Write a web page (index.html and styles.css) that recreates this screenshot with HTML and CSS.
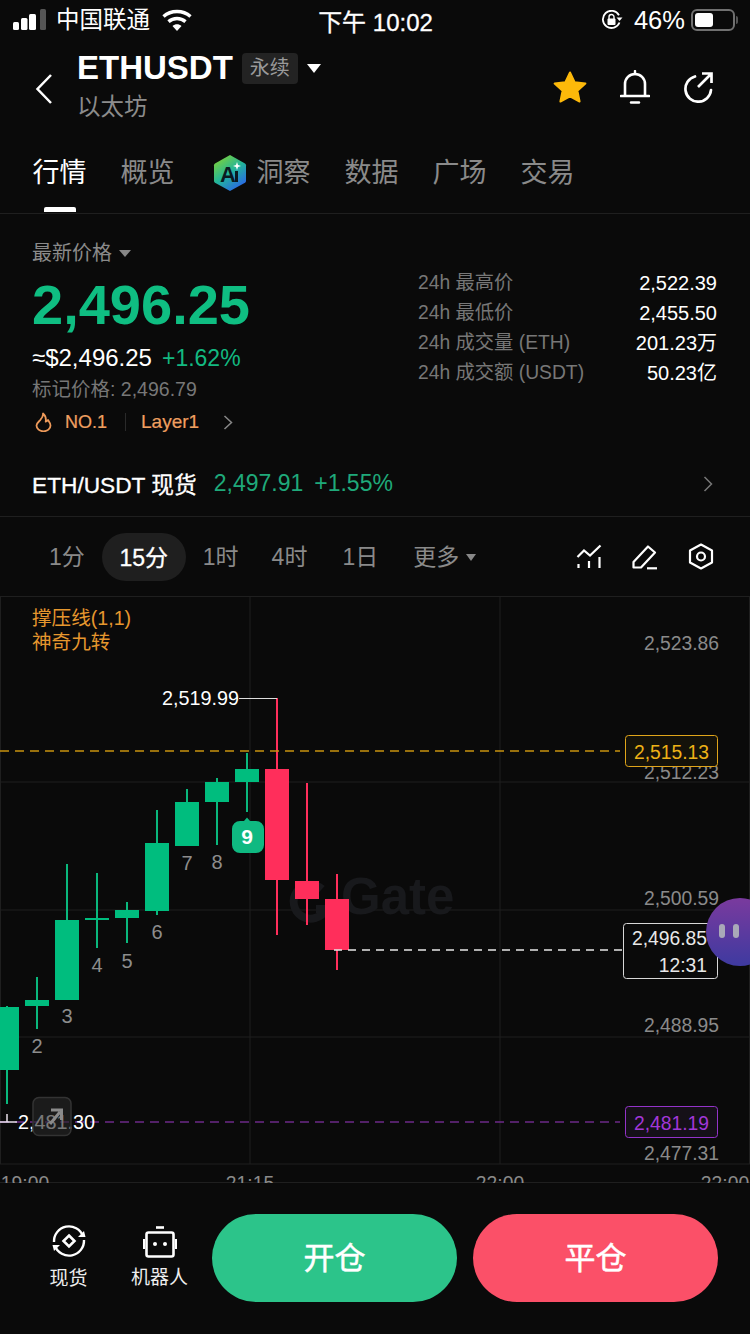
FILE: index.html
```html
<!DOCTYPE html>
<html lang="zh-CN">
<head>
    <meta charset="UTF-8">
    <meta name="viewport" content="width=device-width, initial-scale=1.0">
    <title>ETHUSDT 永续</title>
    <link rel="stylesheet" href="styles.css">
</head>
<body>
<div class="page">
    <!-- status bar -->
    <div class="status-bar">
        <div class="status-left">
            <svg class="signal" width="34" height="22" viewBox="0 0 34 22">
                <rect x="0" y="13" width="6" height="8" rx="1.5" fill="#fff"/>
                <rect x="8" y="9" width="6.5" height="12" rx="1.5" fill="#fff"/>
                <rect x="16" y="5" width="7" height="16" rx="1.5" fill="#fff"/>
                <rect x="27" y="0" width="6" height="21" rx="1.5" fill="#555"/>
            </svg>
            <span class="carrier">中国联通</span>
            <svg class="wifi" width="30" height="22" viewBox="0 0 30 22">
                <path d="M1.5 7.5C9 .8 21 .8 28.5 7.5" fill="none" stroke="#fff" stroke-width="3.4"/>
                <path d="M6.5 12.6c4.8-4.2 12.2-4.2 17 0" fill="none" stroke="#fff" stroke-width="3.4"/>
                <path d="M10.5 17c2.6-2.2 6.4-2.2 9 0L15 22z" fill="#fff"/>
            </svg>
        </div>
        <div class="status-time">下午 10:02</div>
        <div class="status-right">
            <svg class="rotate-lock" width="22" height="20" viewBox="0 0 22 20">
                <path d="M18.5 12.5A8.6 8.6 0 1 1 18 5.2" fill="none" stroke="#fff" stroke-width="1.8"/>
                <path d="M15.5 7.5h6l-3 3.6z" fill="#fff"/>
                <rect x="6.5" y="8.5" width="8" height="6.5" rx="1" fill="#fff"/>
                <path d="M8 9V7a2.5 2.5 0 0 1 5 0v2" fill="none" stroke="#fff" stroke-width="1.4"/>
            </svg>
            <span class="battery-text">46%</span>
            <div class="battery"><div class="battery-fill"></div></div>
            <div class="battery-nub"></div>
        </div>
    </div>

    <!-- symbol header -->
    <div class="symbol-bar">
        <svg class="back" width="18" height="32" viewBox="0 0 18 32">
            <path d="M16 2 2.5 16 16 30" fill="none" stroke="#fff" stroke-width="2.5"/>
        </svg>
        <div class="symbol-info">
            <div class="symbol-line">
                <span class="symbol-name">ETHUSDT</span>
                <span class="symbol-tag">永续</span>
                <span class="caret caret-white"></span>
            </div>
            <div class="symbol-sub">以太坊</div>
        </div>
        <div class="symbol-actions">
            <svg width="34" height="33" viewBox="0 0 34 33">
                <path d="M17 1.5 21.6 11.2 32.4 12.6 24.4 19.8 26.6 30.5 17 25.3 7.4 30.5 9.6 19.8 1.6 12.6 12.4 11.2z" fill="#fdb90a" stroke="#fdb90a" stroke-width="2" stroke-linejoin="round"/>
            </svg>
            <svg width="30" height="34" viewBox="0 0 30 34">
                <path d="M5 25V14a10 10 0 0 1 20 0v11" fill="none" stroke="#fff" stroke-width="2.6"/>
                <path d="M1 26h28" stroke="#fff" stroke-width="2.6" stroke-linecap="round"/>
                <path d="M11 32.5h8" stroke="#fff" stroke-width="2.4" stroke-linecap="round"/>
                <path d="M15 1v3" stroke="#fff" stroke-width="2.4" stroke-linecap="round"/>
            </svg>
            <svg width="31" height="31" viewBox="0 0 31 31">
                <path d="M12 4.5A12.8 12.8 0 1 0 28 18" fill="none" stroke="#fff" stroke-width="2.7" stroke-linecap="round"/>
                <path d="M15 15 28 2M19 1.500h9.500V11" fill="none" stroke="#fff" stroke-width="2.7"/>
            </svg>
        </div>
    </div>

    <!-- tabs -->
    <div class="tabs">
        <div class="tab tab-active">行情</div>
        <div class="tab">概览</div>
        <div class="tab tab-ai">
            <svg width="34" height="38" viewBox="0 0 34 38">
                <defs>
                    <linearGradient id="aiGrad" x1="0.1" y1="0.1" x2="0.7" y2="1">
                        <stop offset="0" stop-color="#7ad13c"/>
                        <stop offset="0.5" stop-color="#22b59a"/>
                        <stop offset="1" stop-color="#2a66e8"/>
                    </linearGradient>
                </defs>
                <path d="M17 1 32 9.5a2 2 0 0 1 1 1.7V27a2 2 0 0 1-1 1.7L17 37 2 28.7a2 2 0 0 1-1-1.7V11.2a2 2 0 0 1 1-1.7z" fill="url(#aiGrad)"/>
                <text class="ai-mark" x="7" y="28">A</text>
                <rect x="22" y="17" width="3" height="11" fill="#0a1a20"/>
                <path d="M24 8l1 3 3 1-3 1-1 3-1-3-3-1 3-1z" fill="#fff"/>
            </svg>
            <span>洞察</span>
        </div>
        <div class="tab">数据</div>
        <div class="tab">广场</div>
        <div class="tab">交易</div>
    </div>

    <!-- price summary -->
    <div class="summary">
        <div class="summary-left">
            <div class="price-label">最新价格<span class="caret caret-grey"></span></div>
            <div class="price-main">2,496.25</div>
            <div class="price-sub"><span class="price-usd">≈$2,496.25</span><span class="price-change">+1.62%</span></div>
            <div class="price-mark">标记价格: 2,496.79</div>
            <div class="price-tags">
                <svg width="17" height="20" viewBox="0 0 17 20">
                    <path d="M8 1.5c.5 3-1 4.5-3 6.800C3 10.300 1.500 11.500 1.500 13.500a7 5.800 0 0 0 14 0c0-2.500-1.500-3.800-2.500-5.500-.7 1-1.500 1.500-2.300 1.700C11.300 6.500 10.300 3.500 8 1.500z" fill="none" stroke="#ee9a5a" stroke-width="1.8" stroke-linejoin="round"/>
                </svg>
                <span class="tag-no">NO.1</span>
                <span class="tag-sep"></span>
                <span class="tag-layer">Layer1</span>
                <svg class="tag-more" width="10" height="15" viewBox="0 0 10 15">
                    <path d="M1.5 1 8.5 7.5 1.5 14" fill="none" stroke="#888" stroke-width="1.5"/>
                </svg>
            </div>
        </div>
        <div class="stats">
            <span class="stat-label">24h 最高价</span><span class="stat-value">2,522.39</span>
            <span class="stat-label">24h 最低价</span><span class="stat-value">2,455.50</span>
            <span class="stat-label">24h 成交量 (ETH)</span><span class="stat-value">201.23万</span>
            <span class="stat-label">24h 成交额 (USDT)</span><span class="stat-value">50.23亿</span>
        </div>
    </div>

    <!-- spot link -->
    <div class="spot-row">
        <span class="spot-name">ETH/USDT 现货</span>
        <span class="spot-price">2,497.91</span>
        <span class="spot-change">+1.55%</span>
        <svg class="spot-more" width="10" height="16" viewBox="0 0 10 16">
            <path d="M1.5 1 8.5 8 1.5 15" fill="none" stroke="#777" stroke-width="1.5"/>
        </svg>
    </div>

    <!-- intervals -->
    <div class="intervals">
        <span class="interval int-1m">1分</span>
        <span class="interval interval-active">15分</span>
        <span class="interval int-1h">1时</span>
        <span class="interval int-4h">4时</span>
        <span class="interval int-1d">1日</span>
        <span class="interval int-more">更多<span class="caret caret-grey"></span></span>
        <div class="chart-tools">
            <svg width="26" height="26" viewBox="0 0 26 26">
                <path d="M1.5 13 8 6.500 14 11.500 24.500 1.500" fill="none" stroke="#fff" stroke-width="2.2"/>
                <path d="M2.500 20v4M13 17v7M23.500 13v11" stroke="#fff" stroke-width="2.2"/>
            </svg>
            <svg width="26" height="26" viewBox="0 0 26 26">
                <path d="M1.5 18 16 2.500 23 8.500 9 23.500H1.500z" fill="none" stroke="#fff" stroke-width="2.2" stroke-linejoin="round"/>
                <path d="M15 24.3h10" stroke="#fff" stroke-width="2.2"/>
            </svg>
            <svg width="26" height="27" viewBox="0 0 26 27">
                <path d="M13 1.500 24 7.500V19.500L13 25.500 2 19.500V7.500z" fill="none" stroke="#fff" stroke-width="2.2" stroke-linejoin="round"/>
                <circle cx="13" cy="13.5" r="4" fill="none" stroke="#fff" stroke-width="2.2"/>
            </svg>
        </div>
    </div>

    <!-- kline chart, coordinates follow the page y -->
    <div class="chart">
        <svg class="chart-svg" width="750" height="586" viewBox="0 597 750 586">
            <g class="grid">
                <path d="M0 782H750M0 910H750M0 1037H750M0 1164H750M0 1182.5H750"/>
                <path d="M.5 597V1164M250 597V1164M500 597V1164M749.5 597V1164"/>
            </g>

            <g class="watermark">
                <path d="M322 889a17 17 0 1 0 4 20h-10" fill="none" stroke="#18191c" stroke-width="8"/>
                <text x="341" y="914">Gate</text>
            </g>

            <text class="legend" x="32" y="625">撑压线(1,1)</text>
            <text class="legend" x="32" y="649">神奇九转</text>

            <!-- up candles -->
            <g class="up-wick">
                <path d="M7 1006V1104M37 977V1029M67 864V920M97 873V948M127 902V943M157 810V915M187 789V802M217 778V845M247 753V812"/>
            </g>
            <g class="up-body">
                <rect x="-5" y="1007" width="24" height="63"/>
                <rect x="25" y="1000" width="24" height="6"/>
                <rect x="55" y="920" width="24" height="80"/>
                <rect x="85" y="918" width="24" height="2"/>
                <rect x="115" y="910" width="24" height="8"/>
                <rect x="145" y="843" width="24" height="68"/>
                <rect x="175" y="802" width="24" height="44"/>
                <rect x="205" y="782" width="24" height="20"/>
                <rect x="235" y="769" width="24" height="13"/>
            </g>

            <!-- down candles -->
            <g class="down-wick">
                <path d="M277 698V935M307 783V925M337 874V970"/>
            </g>
            <g class="down-body">
                <rect x="265" y="769" width="24" height="111"/>
                <rect x="295" y="881" width="24" height="18"/>
                <rect x="325" y="899" width="24" height="51"/>
            </g>

            <!-- td sequence -->
            <g class="td">
                <text x="37" y="1053">2</text>
                <text x="67" y="1023">3</text>
                <text x="97" y="972">4</text>
                <text x="127" y="968">5</text>
                <text x="157" y="939">6</text>
                <text x="187" y="870">7</text>
                <text x="217" y="869">8</text>
            </g>
            <path class="td-badge" d="M238 821H244L247 817.5 250 821H256a8 8 0 0 1 8 8V845a8 8 0 0 1-8 8H240a8 8 0 0 1-8-8V829a8 8 0 0 1 8-8z"/>
            <text class="td-nine" x="247" y="844">9</text>

            <!-- high / low marks -->
            <path class="mark-line" d="M239 698.5H277"/>
            <text class="mark-text" x="239" y="705" text-anchor="end">2,519.99</text>

            <!-- order lines -->
            <path class="dash dash-yellow" d="M0 751H620"/>
            <path class="dash dash-purple" d="M0 1122H620"/>
            <path class="dash dash-white" d="M334 950H623"/>

            <path class="low-line" d="M0 1122H17M7 1114V1122"/>
            <text class="mark-text" x="18" y="1129">2,481.30</text>

            <!-- fullscreen button lies over the low mark -->
            <rect class="expand-box" x="33" y="1097.5" width="38" height="38" rx="6"/>
            <path class="expand-arrow" d="M50 1124 60 1112M51 1110H61.5V1120"/>

            <!-- price axis -->
            <g class="axis">
                <text x="719" y="650">2,523.86</text>
                <text x="719" y="779">2,512.23</text>
                <text x="719" y="905">2,500.59</text>
                <text x="719" y="1032">2,488.95</text>
                <text x="719" y="1160">2,477.31</text>
            </g>

            <rect class="box box-yellow" x="625.5" y="735.5" width="92" height="31" rx="3"/>
            <text class="box-text text-yellow" x="709" y="759">2,515.13</text>
            <rect class="box box-white" x="623.5" y="923.5" width="94" height="55" rx="3"/>
            <text class="box-text text-white" x="707" y="945">2,496.85</text>
            <text class="box-text text-white" x="707" y="972">12:31</text>
            <rect class="box box-purple" x="625.5" y="1106.5" width="92" height="31" rx="3"/>
            <text class="box-text text-purple" x="709" y="1130">2,481.19</text>

            <!-- time axis, cut off by the edge of the chart -->
            <g class="times">
                <text x="25" y="1190">19:00</text>
                <text x="250" y="1190">21:15</text>
                <text x="500" y="1190">22:00</text>
                <text x="725" y="1190">22:00</text>
            </g>
        </svg>
        <div class="float-bot">
            <span class="float-eye"></span>
            <span class="float-eye"></span>
        </div>
    </div>

    <!-- bottom actions -->
    <div class="bottom-bar">
        <div class="bottom-link link-spot">
            <svg width="34" height="34" viewBox="0 0 34 34">
                <path d="M2 18A15 15 0 0 1 31 12" fill="none" stroke="#fff" stroke-width="2.4"/>
                <path d="M32 16A15 15 0 0 1 3 22" fill="none" stroke="#fff" stroke-width="2.4"/>
                <path d="M26 13H33.5L32 7z" fill="#fff"/>
                <path d="M8 21H.5L2 27z" fill="#fff"/>
                <path d="M17 11.500 22.500 17 17 22.500 11.500 17z" fill="none" stroke="#fff" stroke-width="2.6"/>
            </svg>
            <span>现货</span>
        </div>
        <div class="bottom-link link-bot">
            <svg width="34" height="32" viewBox="0 0 34 32">
                <path d="M13 1.5h8" stroke="#fff" stroke-width="2.6"/>
                <rect x="3.5" y="6.5" width="27" height="24" rx="2" fill="none" stroke="#fff" stroke-width="2.6"/>
                <path d="M1 13v10M33 13v10" stroke="#fff" stroke-width="2.2"/>
                <circle cx="12" cy="18" r="2" fill="#fff"/>
                <circle cx="22" cy="18" r="2" fill="#fff"/>
            </svg>
            <span>机器人</span>
        </div>
        <div class="action action-open">开仓</div>
        <div class="action action-close">平仓</div>
    </div>
</div>
</body>
</html>
```

FILE: styles.css
```css
* {
    box-sizing: border-box;
}
html, body {
    margin: 0;
    padding: 0;
    background-color: #0a0a0a;
}
body {
    font-family: "Liberation Sans", "Noto Sans CJK SC", sans-serif;
    color: #fff;
}
.page {
    position: relative;
    width: 750px;
    height: 1334px;
    overflow: hidden;
    background-color: #0a0a0a;
}
.caret {
    display: inline-block;
    width: 0;
    height: 0;
    border-left: 7px solid transparent;
    border-right: 7px solid transparent;
}
.caret-white {
    border-top: 9px solid #fff;
}
.caret-grey {
    border-left-width: 6px;
    border-right-width: 6px;
    border-top: 7px solid #888;
}

/* status bar */
.status-bar {
    display: flex;
    align-items: center;
    justify-content: space-between;
    height: 40px;
    padding: 0 12px 0 13px;
}
.status-left {
    display: flex;
    align-items: center;
    width: 240px;
}
.carrier {
    margin-left: 9px;
    font-size: 23.5px;
    line-height: 40px;
}
.wifi {
    margin-left: 12px;
}
.status-time {
    font-size: 24px;
    -webkit-text-stroke: 0.3px #fff;
}
.status-right {
    display: flex;
    align-items: center;
    justify-content: flex-end;
    width: 240px;
}
.battery-text {
    margin-left: 11px;
    font-size: 25.5px;
}
.battery {
    width: 44px;
    height: 22px;
    margin-left: 6px;
    padding: 2px;
    border: 2px solid #707070;
    border-radius: 6px;
}
.battery-fill {
    width: 18px;
    height: 14px;
    border-radius: 3px;
    background-color: #fff;
}
.battery-nub {
    width: 2px;
    height: 8px;
    margin-left: 1px;
    border-radius: 0 2px 2px 0;
    background-color: #555;
}

/* symbol header */
.symbol-bar {
    display: flex;
    align-items: flex-start;
    height: 90px;
    padding: 8px 36px 0 35px;
}
.back {
    margin-top: 25px;
}
.symbol-info {
    margin-left: 24px;
}
.symbol-line {
    display: flex;
    align-items: center;
    height: 40px;
}
.symbol-name {
    font-size: 33px;
    font-weight: 700;
}
.symbol-tag {
    width: 56px;
    height: 31px;
    margin-left: 9px;
    border-radius: 4px;
    background-color: #232323;
    color: #9a9a9a;
    font-size: 20px;
    line-height: 30px;
    text-align: center;
}
.symbol-line .caret {
    margin-left: 9px;
}
.symbol-sub {
    margin-top: 3px;
    color: #8c8c8c;
    font-size: 23.5px;
    line-height: 32px;
}
.symbol-actions {
    display: flex;
    align-items: center;
    gap: 33px;
    margin-left: auto;
    margin-top: 22px;
}

/* tabs */
.tabs {
    display: flex;
    align-items: center;
    gap: 34px;
    height: 84px;
    padding: 2px 33px 0 32.5px;
    border-bottom: 1px solid #1f1f1f;
}
.tab {
    position: relative;
    display: flex;
    align-items: center;
    color: #8a8a8a;
    font-size: 27px;
    line-height: 40px;
}
.tab-ai {
    gap: 10px;
    margin-left: 4px;
}
.tab-active {
    color: #fff;
}
.tab-active::after {
    content: "";
    position: absolute;
    left: 11px;
    bottom: -19px;
    width: 32px;
    height: 5px;
    border-radius: 2px 2px 0 0;
    background-color: #fff;
}
.ai-mark {
    fill: #0a1a20;
    font-size: 22px;
    font-weight: 700;
}

/* price summary */
.summary {
    display: flex;
    justify-content: space-between;
    height: 235px;
    padding: 25px 33px 0 32px;
}
.price-label {
    display: flex;
    align-items: center;
    color: #8a8a8a;
    font-size: 20px;
    line-height: 28px;
}
.price-label .caret {
    margin-left: 7px;
}
.price-main {
    margin-top: 6px;
    color: #0fbe82;
    font-size: 56px;
    font-weight: 700;
    line-height: 64px;
}
.price-sub {
    display: flex;
    align-items: center;
    gap: 10px;
    margin-top: 6px;
    font-size: 23px;
    line-height: 30px;
}
.price-usd {
    font-size: 24px;
}
.price-change {
    color: #13b981;
}
.price-mark {
    color: #777;
    font-size: 19.5px;
    line-height: 32px;
}
.price-tags {
    display: flex;
    align-items: center;
    margin-top: 2px;
    padding-left: 3px;
    color: #ef9f60;
    font-size: 19px;
    line-height: 30px;
    -webkit-text-stroke: 0.2px #ef9f60;
}
.tag-no {
    margin-left: 13px;
    font-size: 18px;
}
.tag-sep {
    width: 1px;
    height: 18px;
    margin: 0 15px 0 18px;
    background-color: #2a2a2a;
}
.tag-more {
    margin-left: 24px;
}
.stats {
    display: grid;
    grid-template-columns: 1fr auto;
    grid-auto-rows: 30px;
    column-gap: 10px;
    align-content: start;
    width: 299px;
    margin-top: 29px;
    font-size: 20px;
    line-height: 30px;
}
.stat-label {
    color: #777;
    font-size: 19.3px;
}
.stat-value {
    color: #fff;
    text-align: right;
}

/* spot link */
.spot-row {
    display: flex;
    align-items: center;
    height: 68px;
    padding: 2px 37px 0 32px;
    border-bottom: 1px solid #1f1f1f;
    font-size: 23px;
}
.spot-name {
    font-size: 22.7px;
    -webkit-text-stroke: 0.3px #fff;
}
.spot-price {
    margin-left: 17px;
    color: #1fa97a;
}
.spot-change {
    margin-left: 11px;
    color: #1fa97a;
}
.spot-more {
    margin-left: auto;
}

/* intervals */
.intervals {
    display: flex;
    align-items: center;
    height: 80px;
    padding: 0 36px 0 49px;
    border-bottom: 1px solid #1f1f1f;
}
.interval {
    padding-top: 1px;
    color: #8a8a8a;
    font-size: 23px;
    line-height: 48px;
}
.interval-active {
    width: 84px;
    height: 48px;
    margin-left: 17px;
    border-radius: 24px;
    background-color: #1f1f1f;
    color: #fff;
    text-align: center;
    -webkit-text-stroke: 0.3px #fff;
}
.int-1h {
    margin-left: 17px;
}
.int-4h {
    margin-left: 33px;
}
.int-1d {
    margin-left: 35px;
}
.int-more {
    display: flex;
    align-items: center;
    margin-left: 35px;
}
.int-more .caret {
    margin-left: 7px;
    border-left-width: 5px;
    border-right-width: 5px;
}
.chart-tools {
    display: flex;
    align-items: center;
    gap: 30px;
    margin-left: auto;
}

/* kline chart */
.chart {
    height: 586px;
}
.chart-svg {
    display: block;
    overflow: hidden;
}
.grid path {
    fill: none;
    stroke: #1f1f1f;
    stroke-width: 1;
}
.watermark text {
    fill: #18191c;
    font-size: 51px;
    font-weight: 700;
}
.legend {
    fill: #e6972e;
    font-size: 19.6px;
}
.up-wick path {
    fill: none;
    stroke: #0ab87d;
    stroke-width: 2;
}
.up-body rect {
    fill: #00bd7e;
}
.down-wick path {
    fill: none;
    stroke: #ff2e5b;
    stroke-width: 2;
}
.down-body rect {
    fill: #ff2e5b;
}
.td text {
    fill: #8d8d8d;
    font-size: 20px;
    text-anchor: middle;
}
.td-badge {
    fill: #0fb981;
}
.td-nine {
    fill: #fff;
    font-size: 21px;
    font-weight: 700;
    text-anchor: middle;
}
.mark-line {
    fill: none;
    stroke: #ddd;
    stroke-width: 1;
}
.low-line {
    fill: none;
    stroke: #e8e0ea;
    stroke-width: 1.5;
}
.mark-text {
    fill: #fff;
    font-size: 19.8px;
}
.dash {
    fill: none;
    stroke-width: 1.5;
    stroke-dasharray: 9 6;
}
.dash-yellow {
    stroke: #c8930f;
}
.dash-purple {
    stroke: #6c2a88;
}
.dash-white {
    stroke: #e8e8e8;
    stroke-dasharray: 8 6;
}
.expand-box {
    fill: rgba(38, 38, 38, 0.62);
    stroke: #333;
    stroke-width: 1.5;
}
.expand-arrow {
    fill: none;
    stroke: #8a8a8a;
    stroke-width: 3;
}
.axis text {
    fill: #8a8a8a;
    font-size: 19.3px;
    text-anchor: end;
}
.box {
    fill: #0a0a0a;
    stroke-width: 1;
}
.box-yellow {
    stroke: #e0a51a;
    fill: #14120a;
}
.box-white {
    stroke: #d8d8d8;
}
.box-purple {
    stroke: #9333c9;
    fill: #151018;
}
.box-text {
    font-size: 19.3px;
    text-anchor: end;
}
.text-yellow {
    fill: #eeb217;
}
.text-white {
    fill: #e8e8e8;
}
.text-purple {
    fill: #a237d8;
}
.times text {
    fill: #8a8a8a;
    font-size: 19.3px;
    text-anchor: middle;
}

/* floating assistant, over the chart edge */
.float-bot {
    position: absolute;
    left: 706px;
    top: 898px;
    display: flex;
    gap: 8px;
    width: 68px;
    height: 68px;
    padding: 26px 0 0 13px;
    border-radius: 50%;
    background: linear-gradient(180deg, #7a3a9e, #3e3aa0);
}
.float-eye {
    width: 6px;
    height: 14px;
    border-radius: 3px;
    background-color: #a9a9b8;
}

/* bottom actions */
.bottom-bar {
    display: flex;
    align-items: flex-start;
    height: 151px;
    padding: 31px 32px 0 0;
}
.bottom-link {
    display: flex;
    flex-direction: column;
    align-items: center;
    gap: 8px;
    color: #eee;
    font-size: 19px;
    line-height: 26px;
}
.link-spot {
    width: 91px;
    margin-left: 23px;
    margin-top: 10px;
}
.link-bot {
    width: 91px;
    margin-left: 0;
    margin-top: 12px;
    gap: 7px;
}
.action {
    width: 245px;
    height: 88px;
    border-radius: 44px;
    color: #fff;
    font-size: 31px;
    line-height: 90px;
    text-align: center;
    -webkit-text-stroke: 0.5px #fff;
}
.action-open {
    margin-left: 7px;
    background-color: #2cc48a;
}
.action-close {
    margin-left: 16px;
    background-color: #fb5068;
}
```
